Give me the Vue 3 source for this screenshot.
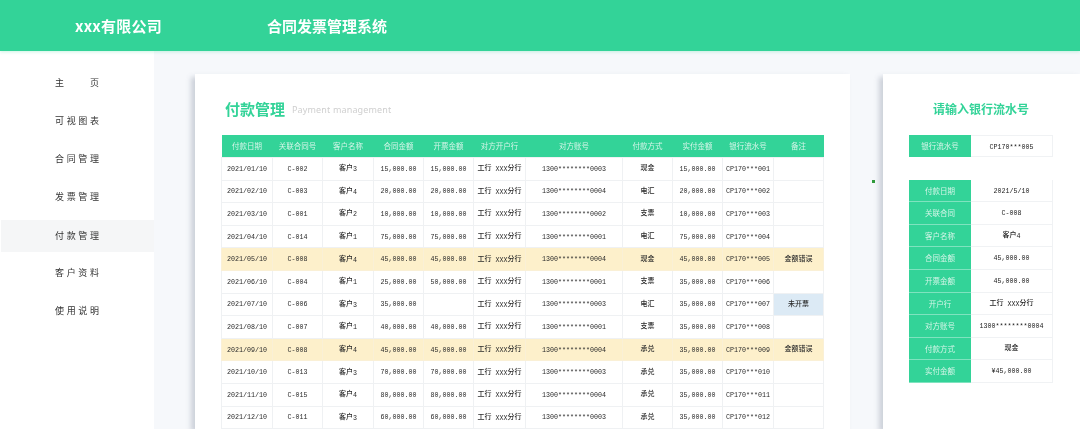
<script setup>
const heads = ['付款日期','关联合同号','客户名称','合同金额','开票金额','对方开户行','对方账号','付款方式','实付金额','银行流水号','备注']
const bank = '工行 XXX分行'
const rows = [
  ['2021/01/10','C-002','客户3','15,000.00','15,000.00',bank,'1300********0003','现金','15,000.00','CP170***001',''],
  ['2021/02/10','C-003','客户4','20,000.00','20,000.00',bank,'1300********0004','电汇','20,000.00','CP170***002',''],
  ['2021/03/10','C-001','客户2','10,000.00','10,000.00',bank,'1300********0002','支票','10,000.00','CP170***003',''],
  ['2021/04/10','C-014','客户1','75,000.00','75,000.00',bank,'1300********0001','电汇','75,000.00','CP170***004',''],
  ['2021/05/10','C-008','客户4','45,000.00','45,000.00',bank,'1300********0004','现金','45,000.00','CP170***005','金额错误'],
  ['2021/06/10','C-004','客户1','25,000.00','50,000.00',bank,'1300********0001','支票','35,000.00','CP170***006',''],
  ['2021/07/10','C-006','客户3','35,000.00','',bank,'1300********0003','电汇','35,000.00','CP170***007','未开票'],
  ['2021/08/10','C-007','客户1','40,000.00','40,000.00',bank,'1300********0001','支票','35,000.00','CP170***008',''],
  ['2021/09/10','C-008','客户4','45,000.00','45,000.00',bank,'1300********0004','承兑','35,000.00','CP170***009','金额错误'],
  ['2021/10/10','C-013','客户3','70,000.00','70,000.00',bank,'1300********0003','承兑','35,000.00','CP170***010',''],
  ['2021/11/10','C-015','客户4','80,000.00','80,000.00',bank,'1300********0004','承兑','35,000.00','CP170***011',''],
  ['2021/12/10','C-011','客户3','60,000.00','60,000.00',bank,'1300********0003','承兑','35,000.00','CP170***012',''],
]
const menu = ['主页','可视图表','合同管理','发票管理','付款管理','客户资料','使用说明']
const details = [
  ['付款日期','2021/5/10'],['关联合同','C-008'],['客户名称','客户4'],['合同金额','45,000.00'],['开票金额','45,000.00'],
  ['开户行',bank],['对方账号','1300********0004'],['付款方式','现金'],['实付金额','¥45,000.00'],
]
const isCjk = (s) => /[\u4e00-\u9fff]/.test(s)
const segs = (s) => s.match(/[\u4e00-\u9fff]+|[^\u4e00-\u9fff]+/g) || []
</script>

<template>
  <div class="page">
    <header class="topbar">
      <div class="company">xxx有限公司</div>
      <div class="system">合同发票管理系统</div>
    </header>
    <div class="body">
      <aside class="side">
        <div v-for="(m, i) in menu" :key="m" class="item" :class="{ active: i === 4 }"><span class="label">{{ m }}</span></div>
      </aside>
      <main class="main">
        <section class="card">
          <div class="title-row">
            <h1>付款管理</h1>
            <span class="en">Payment management</span>
          </div>
          <table class="grid">
            <colgroup>
              <col v-for="(w, i) in [51,50,51,50,50,52,97,50,50,51,50]" :key="i" :style="{ width: w + 'px' }" />
            </colgroup>
            <thead>
              <tr><th v-for="h in heads" :key="h">{{ h }}</th></tr>
            </thead>
            <tbody>
              <tr v-for="r in rows" :key="r[0]" :class="{ warn: r[10] === '金额错误' }">
                <td v-for="(c, j) in r" :key="j" :class="{ blue: c === '未开票' }">
                  <span v-for="(s, n) in segs(c)" :key="n" :class="{ cjk: isCjk(s) }">{{ s }}</span>
                </td>
              </tr>
            </tbody>
          </table>
        </section>
        <div class="gap"><i class="speck"></i></div>
        <section class="panel">
          <h2>请输入银行流水号</h2>
          <div class="kv search">
            <div class="k">银行流水号</div>
            <div class="v">CP170***005</div>
          </div>
          <div class="detail">
            <div v-for="d in details" :key="d[0]" class="kv">
              <div class="k">{{ d[0] }}</div>
              <div class="v"><span v-for="(s, n) in segs(d[1])" :key="n" :class="{ cjk: isCjk(s) }">{{ s }}</span></div>
            </div>
          </div>
        </section>
      </main>
    </div>
  </div>
</template>

<style>
html, body { margin: 0; background: #fff; overflow: hidden; }
</style>

<style scoped>
.page {
  width: 1080px; height: 429px; overflow: hidden; display: flex; flex-direction: column;
  font-family: "Liberation Mono", "Noto Sans CJK SC", monospace;
  filter: blur(0.35px);
}
.topbar {
  height: 51px; flex: none; background: #33d398; color: #fff; display: flex; align-items: center;
  font-family: "Noto Sans CJK SC", sans-serif; font-weight: 700; font-size: 15px;
  box-shadow: 0 1px 3px rgba(51, 211, 152, .25); position: relative; z-index: 2;
}
.company { margin-left: 75px; width: 192px; letter-spacing: .25px; }
.body { flex: 1; display: flex; min-height: 0; }
.side { width: 154px; flex: none; background: #fff; padding-top: 13px; box-sizing: border-box; }
.item { height: 38px; display: flex; align-items: center; padding-left: 55px; color: #333; }
.item.active { background: #f5f6f7; margin: 4px 0 2px 1px; padding: 0 0 1px 54px; height: 32px; box-sizing: border-box; }
.label {
  width: 44px; font-family: "Noto Sans CJK SC", sans-serif; font-size: 9px; line-height: 12px;
  text-align: justify; text-align-last: justify;
}
.main { flex: 1; display: flex; background: #f6f8fb; padding: 23px 0 0 41px; min-width: 0; }
.card {
  width: 655px; flex: none; background: #fff; box-shadow: -4px 3px 5px rgba(110, 120, 140, .3);
  padding: 0 26px 0 27px; box-sizing: border-box;
}
.title-row { height: 61px; display: flex; align-items: center; padding: 8px 0 0 4px; margin-left: -1px; box-sizing: border-box; }
h1 { margin: 0; color: #33d398; font: 700 15px/1 "Noto Sans CJK SC", sans-serif; }
.en { margin-left: 7px; color: #cfcfcf; font: 9px/1 "Noto Sans", sans-serif; letter-spacing: .15px; padding-top: 2px; }
.grid { width: 602px; margin-left: -1px; border-collapse: collapse; table-layout: fixed; font-size: 6.67px; color: #2a2a2a; }
th {
  height: 22px; padding: 0; background: #33d398; color: #d5f5e8; font: 400 7.5px/1 "Noto Sans CJK SC", sans-serif;
}
td {
  height: 22.6px; box-sizing: border-box; padding: 0; text-align: center; white-space: nowrap;
  border: 1px solid #eff1f3; font-family: "Liberation Mono", "Noto Sans CJK SC", monospace;
}
.cjk { font: 500 7px/1 "Noto Sans CJK SC", sans-serif; vertical-align: 1px; }
tr.warn td { background: #fdf0cb; border-color: #faf0d6; }
td.blue { background: #dceaf5; }
.gap { width: 33px; flex: none; position: relative; }
.speck { position: absolute; left: 22px; top: 106px; width: 3px; height: 3px; background: #2f9a3a; }
.panel {
  flex: 1; background: #fff; box-shadow: -4px 3px 5px rgba(110, 120, 140, .3);
  padding: 0 27px 0 26px; box-sizing: border-box; min-width: 0;
}
h2 { margin: 0; height: 60.5px; padding-top: 26px; box-sizing: border-box; text-align: center; color: #33d398; font: 700 12px/18px "Noto Sans CJK SC", sans-serif; }
.detail { margin-top: 22.5px; }
.kv { display: flex; height: 22.6px; }
.k {
  width: 62px; flex: none; background: #33d398; color: #d5f5e8; font: 400 7.5px/22px "Noto Sans CJK SC", sans-serif;
  text-align: center; border-bottom: 1px solid #7fe3bf; box-sizing: border-box;
}
.v {
  flex: 1; text-align: center; font-size: 6.67px; line-height: 22px; color: #222; box-sizing: border-box;
  border: 1px solid #f0f2f4; border-left: 0; border-top: 0;
}
.search .k { border-bottom: 0; }
.search .v { border-top: 1px solid #f0f2f4; }
</style>
